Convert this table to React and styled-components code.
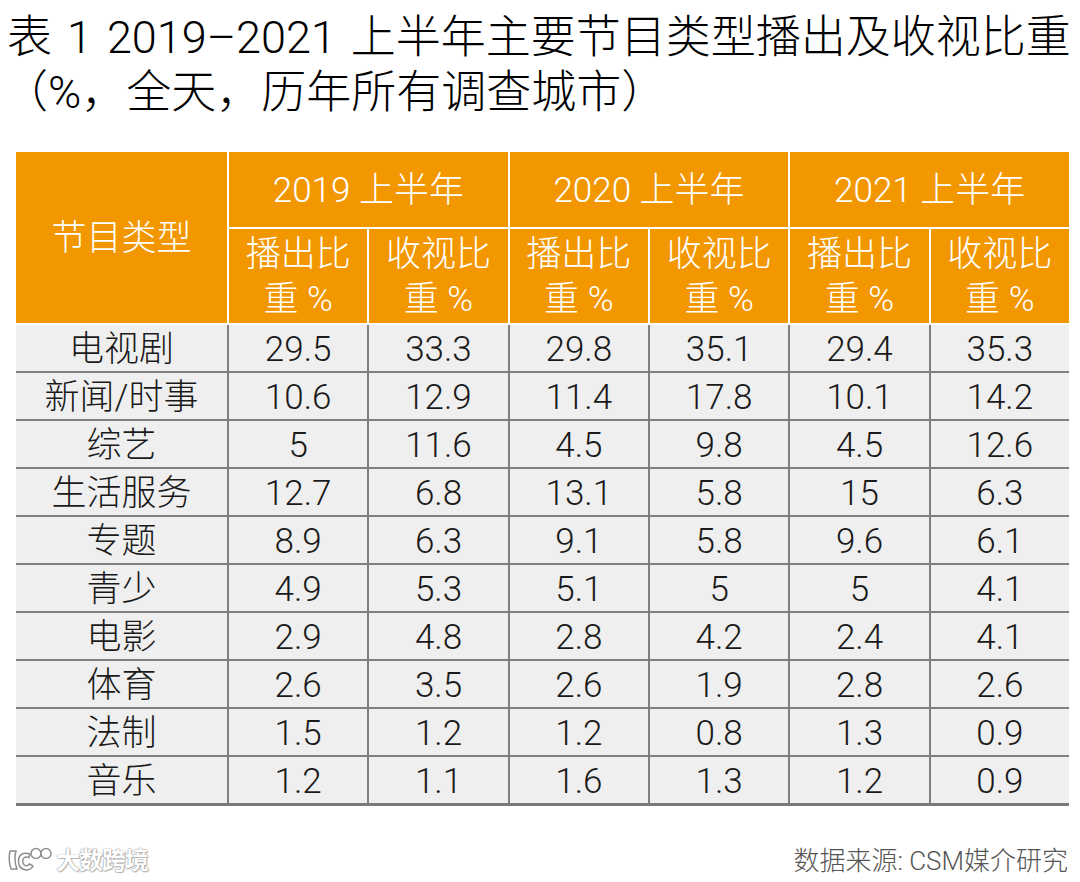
import React from "react";
import styled, { createGlobalStyle } from "styled-components";

const Global = createGlobalStyle`
  html, body { margin: 0; padding: 0; background: #ffffff; }
  body { font-family: "Liberation Sans", "Noto Sans CJK SC", sans-serif; }
`;

const Page = styled.div`
  width: 1080px;
  height: 882px;
  background: #ffffff;
  display: flex;
  flex-direction: column;
  overflow: hidden;
`;

const Title = styled.h1`
  margin: 0;
  padding: 10px 0 0 7px;
  font-family: "Roboto", "Noto Sans CJK SC", sans-serif;
  font-weight: 300;
  font-size: 45px;
  line-height: 55px;
  word-spacing: 4px;
  color: #000000;
  white-space: nowrap;
`;

const TitleLine = styled.span`
  display: block;
  margin-left: ${(p) => p.$indent || 0}px;
`;

const TableWrap = styled.div`
  margin: 32px 0 0 16px;
  width: 1053px;
  font-family: "Roboto", "Noto Sans CJK SC", sans-serif;
  font-weight: 300;
  font-size: 35px;
`;

const Head = styled.div`
  display: grid;
  grid-template-columns: 211px repeat(6, 1fr);
  grid-template-rows: 75px 94px;
  gap: 2px;
  background: #ffffff;
  padding-bottom: 2px;
`;

const HeadCell = styled.div`
  background: #f29700;
  color: #ffffff;
  display: flex;
  align-items: center;
  justify-content: center;
  text-align: center;
  line-height: 45px;
  padding: 2px 6px 0;
  grid-row: ${(p) => (p.$rowSpan ? `span ${p.$rowSpan}` : "auto")};
  grid-column: ${(p) => (p.$colSpan ? `span ${p.$colSpan}` : "auto")};
`;

const Body = styled.div`
  display: grid;
  grid-template-columns: 211px repeat(6, 1fr);
  grid-auto-rows: 46px;
  gap: 2px;
  background: #7f7f7f;
  border-bottom: 3px solid #7a7a7a;
`;

const Cell = styled.div`
  background: #efefef;
  color: #1a1a1a;
  display: flex;
  align-items: center;
  justify-content: center;
  line-height: 1;
  padding-top: 2px;
  white-space: nowrap;
`;

const Footer = styled.div`
  display: flex;
  justify-content: space-between;
  align-items: center;
  margin-top: 34px;
  padding: 0 12px 0 8px;
`;

const Watermark = styled.div`
  display: flex;
  align-items: center;
  gap: 4px;
  color: #ffffff;
  font-family: "Noto Sans CJK SC", sans-serif;
  font-weight: 700;
  font-size: 24px;
  letter-spacing: -1px;
  text-shadow: 0 0 1px #8a8a8a, 0 0 1px #8a8a8a, 1px 1px 1px #bdbdbd;
`;

const Source = styled.div`
  font-family: "Roboto", "Noto Sans CJK SC", sans-serif;
  font-weight: 300;
  font-size: 26px;
  color: #555555;
`;

const rows = [
  ["电视剧", "29.5", "33.3", "29.8", "35.1", "29.4", "35.3"],
  ["新闻/时事", "10.6", "12.9", "11.4", "17.8", "10.1", "14.2"],
  ["综艺", "5", "11.6", "4.5", "9.8", "4.5", "12.6"],
  ["生活服务", "12.7", "6.8", "13.1", "5.8", "15", "6.3"],
  ["专题", "8.9", "6.3", "9.1", "5.8", "9.6", "6.1"],
  ["青少", "4.9", "5.3", "5.1", "5", "5", "4.1"],
  ["电影", "2.9", "4.8", "2.8", "4.2", "2.4", "4.1"],
  ["体育", "2.6", "3.5", "2.6", "1.9", "2.8", "2.6"],
  ["法制", "1.5", "1.2", "1.2", "0.8", "1.3", "0.9"],
  ["音乐", "1.2", "1.1", "1.6", "1.3", "1.2", "0.9"],
];

const years = ["2019 上半年", "2020 上半年", "2021 上半年"];

function Logo() {
  return (
    <svg width="44" height="28" viewBox="0 0 44 28">
      <g fill="#ffffff" stroke="#8f8f8f" strokeWidth="1.5">
        <path d="M2 6 Q0 15 3 24 L9 24 Q5.5 15 8 6 Z" />
        <path d="M22 9 Q12 6 10.5 15 Q10 24 18 25 Q23 25 25 21 L21.5 19 Q19.5 21.5 17 20.5 Q14 18.5 15 14.5 Q16 11 21 12.5 Z" />
        <circle cx="28" cy="8.5" r="5" />
        <circle cx="38" cy="8.5" r="5" />
      </g>
    </svg>
  );
}

export default function App() {
  return (
    <Page>
      <Global />
      <Title>
        <TitleLine>表 1 2019–2021 上半年主要节目类型播出及收视比重</TitleLine>
        <TitleLine $indent={-4}>（%，全天，历年所有调查城市）</TitleLine>
      </Title>
      <TableWrap>
        <Head>
          <HeadCell $rowSpan={2}>节目类型</HeadCell>
          {years.map((y) => (
            <HeadCell key={y} $colSpan={2}>
              {y}
            </HeadCell>
          ))}
          {years.map((y) => (
            <React.Fragment key={y + "s"}>
              <HeadCell>播出比重 %</HeadCell>
              <HeadCell>收视比重 %</HeadCell>
            </React.Fragment>
          ))}
        </Head>
        <Body>
          {rows.map((r) =>
            r.map((v, i) => <Cell key={r[0] + i}>{v}</Cell>)
          )}
        </Body>
      </TableWrap>
      <Footer>
        <Watermark>
          <Logo />
          <span>大数跨境</span>
        </Watermark>
        <Source>数据来源: CSM媒介研究</Source>
      </Footer>
    </Page>
  );
}
